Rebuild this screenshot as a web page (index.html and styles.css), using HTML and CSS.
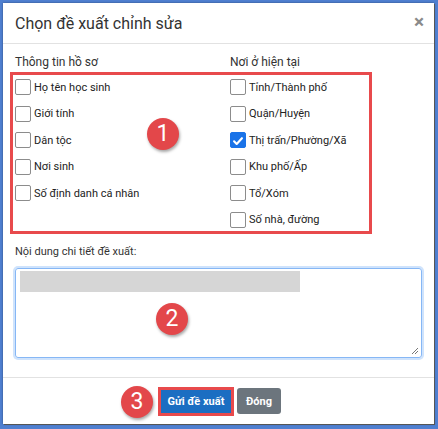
FILE: index.html
```html
<!DOCTYPE html>
<html lang="vi">
<head>
  <meta charset="UTF-8">
  <title>Chọn đề xuất chỉnh sửa</title>
  <link rel="stylesheet" href="styles.css">
</head>
<body>

<div class="modal">
  <div class="modal-header">
    <h4>Chọn đề xuất chỉnh sửa</h4>
    <span class="close">&times;</span>
  </div>

  <div class="modal-body">
    <div class="col-heads">
      <span>Thông tin hồ sơ</span>
      <span>Nơi ở hiện tại</span>
    </div>

    <div class="options">
      <div class="col">
        <label><span class="box"></span>Họ tên học sinh</label>
        <label><span class="box"></span>Giới tính</label>
        <label><span class="box"></span>Dân tộc</label>
        <label><span class="box"></span>Nơi sinh</label>
        <label><span class="box"></span>Số định danh cá nhân</label>
      </div>
      <div class="col">
        <label><span class="box"></span>Tỉnh/Thành phố</label>
        <label><span class="box"></span>Quận/Huyện</label>
        <label><span class="box checked">
          <svg viewBox="0 0 16 16" width="16" height="16"><path d="M3.5 8.4l3 3 6-6.6" fill="none" stroke="#fff" stroke-width="2.4" stroke-linecap="round" stroke-linejoin="round"/></svg>
        </span>Thị trấn/Phường/Xã</label>
        <label><span class="box"></span>Khu phố/Ấp</label>
        <label><span class="box"></span>Tổ/Xóm</label>
        <label><span class="box"></span>Số nhà, đường</label>
      </div>
      <span class="badge badge-1">1</span>
    </div>

    <p class="field-label">Nội dung chi tiết đề xuất:</p>
    <div class="textarea">
      <span class="redacted"></span>
      <span class="badge badge-2">2</span>
      <svg class="grip" viewBox="0 0 8 8" width="8" height="8"><path d="M7 1L1 7M7 4L4 7" stroke="#777" stroke-width="1"/></svg>
    </div>
  </div>

  <div class="modal-footer">
    <span class="badge badge-3">3</span>
    <span class="outline"><button class="btn btn-primary">Gửi đề xuất</button></span>
    <button class="btn btn-secondary">Đóng</button>
  </div>
</div>

</body>
</html>
```

FILE: styles.css
```css
* {
  margin: 0;
  padding: 0;
  box-sizing: border-box;
}

body {
  background: #4f7fd0;
  font-family: Roboto, "Liberation Sans", sans-serif;
  color: #333;
  padding: 3px 4px 5px 3px;
}

.modal {
  width: 431px;
  height: 421px;
  background: white;
  box-shadow: 1px 1px 0 #555, 0 0 2px rgba(0, 0, 0, 0.4);
  display: flex;
  flex-direction: column;
}

.modal-header {
  height: 41px;
  padding: 0 12px;
  border-bottom: 1px solid #e2e2e2;
  display: flex;
  align-items: center;
  justify-content: space-between;
}

.modal-header h4 {
  font-size: 16px;
  font-weight: 400;
  color: #333;
}

.close {
  font-size: 19px;
  font-weight: 700;
  color: #8a8a8a;
  line-height: 1;
  margin-top: -3px;
  margin-right: -2px;
}

.modal-body {
  padding: 10px 12px 0;
  flex: 1;
}

.col-heads {
  display: grid;
  grid-template-columns: 215px 1fr;
  font-size: 12px;
  line-height: 14px;
  margin-top: 1px;
}

.options {
  position: relative;
  width: 362px;
  margin: 3px 0 0 -5px;
  border: 3px solid #e84a4c;
  padding: 4px 0 3px 2px;
  display: grid;
  grid-template-columns: 215px 1fr;
}

.col {
  display: flex;
  flex-direction: column;
  gap: 10.6px;
}

.col label {
  display: flex;
  align-items: center;
  height: 16px;
  font-size: 11px;
  color: #222;
}

.box {
  width: 16px;
  height: 16px;
  border: 1px solid #8c8c8c;
  border-radius: 2px;
  margin-right: 3px;
  flex: none;
  display: flex;
}

.box.checked {
  background: #1a73e8;
  border-color: #1a73e8;
}

.badge {
  position: absolute;
  width: 32px;
  height: 32px;
  border-radius: 50%;
  background: #e3474a;
  color: white;
  font-size: 23px;
  line-height: 32px;
  text-align: center;
  box-shadow: 1px 2px 3px rgba(0, 0, 0, 0.35);
}

.badge-1 {
  left: 134px;
  top: 43px;
}

.field-label {
  font-size: 11px;
  margin-top: 11px;
  line-height: 14px;
}

.textarea {
  position: relative;
  height: 90px;
  margin-top: 9px;
  border: 1.5px solid #86b7f5;
  border-radius: 3px;
  box-shadow: 0 0 0 2px #cfe3fc;
}

.redacted {
  display: block;
  width: 280px;
  height: 21px;
  margin: 2.5px 0 0 3.5px;
  background: #d6d6d6;
}

.badge-2 {
  left: 140px;
  top: 34px;
}

.grip {
  position: absolute;
  right: 2px;
  bottom: 2px;
}

.modal-footer {
  position: relative;
  height: 47px;
  border-top: 1px solid #e2e2e2;
  display: flex;
  align-items: center;
  justify-content: center;
  gap: 3px;
  padding-left: 2px;
}

.badge-3 {
  left: 118px;
  top: 8px;
}

.outline {
  border: 3px solid #e84a4c;
  display: flex;
}

.btn {
  border: none;
  font-family: inherit;
  font-size: 11px;
  font-weight: 700;
  color: white;
  height: 23px;
  padding: 0;
  white-space: nowrap;
}

.btn-primary {
  background: #1b6ec2;
  width: 70px;
}

.btn-secondary {
  background: #6c757d;
  height: 26px;
  border-radius: 3px;
  width: 44px;
}
```
